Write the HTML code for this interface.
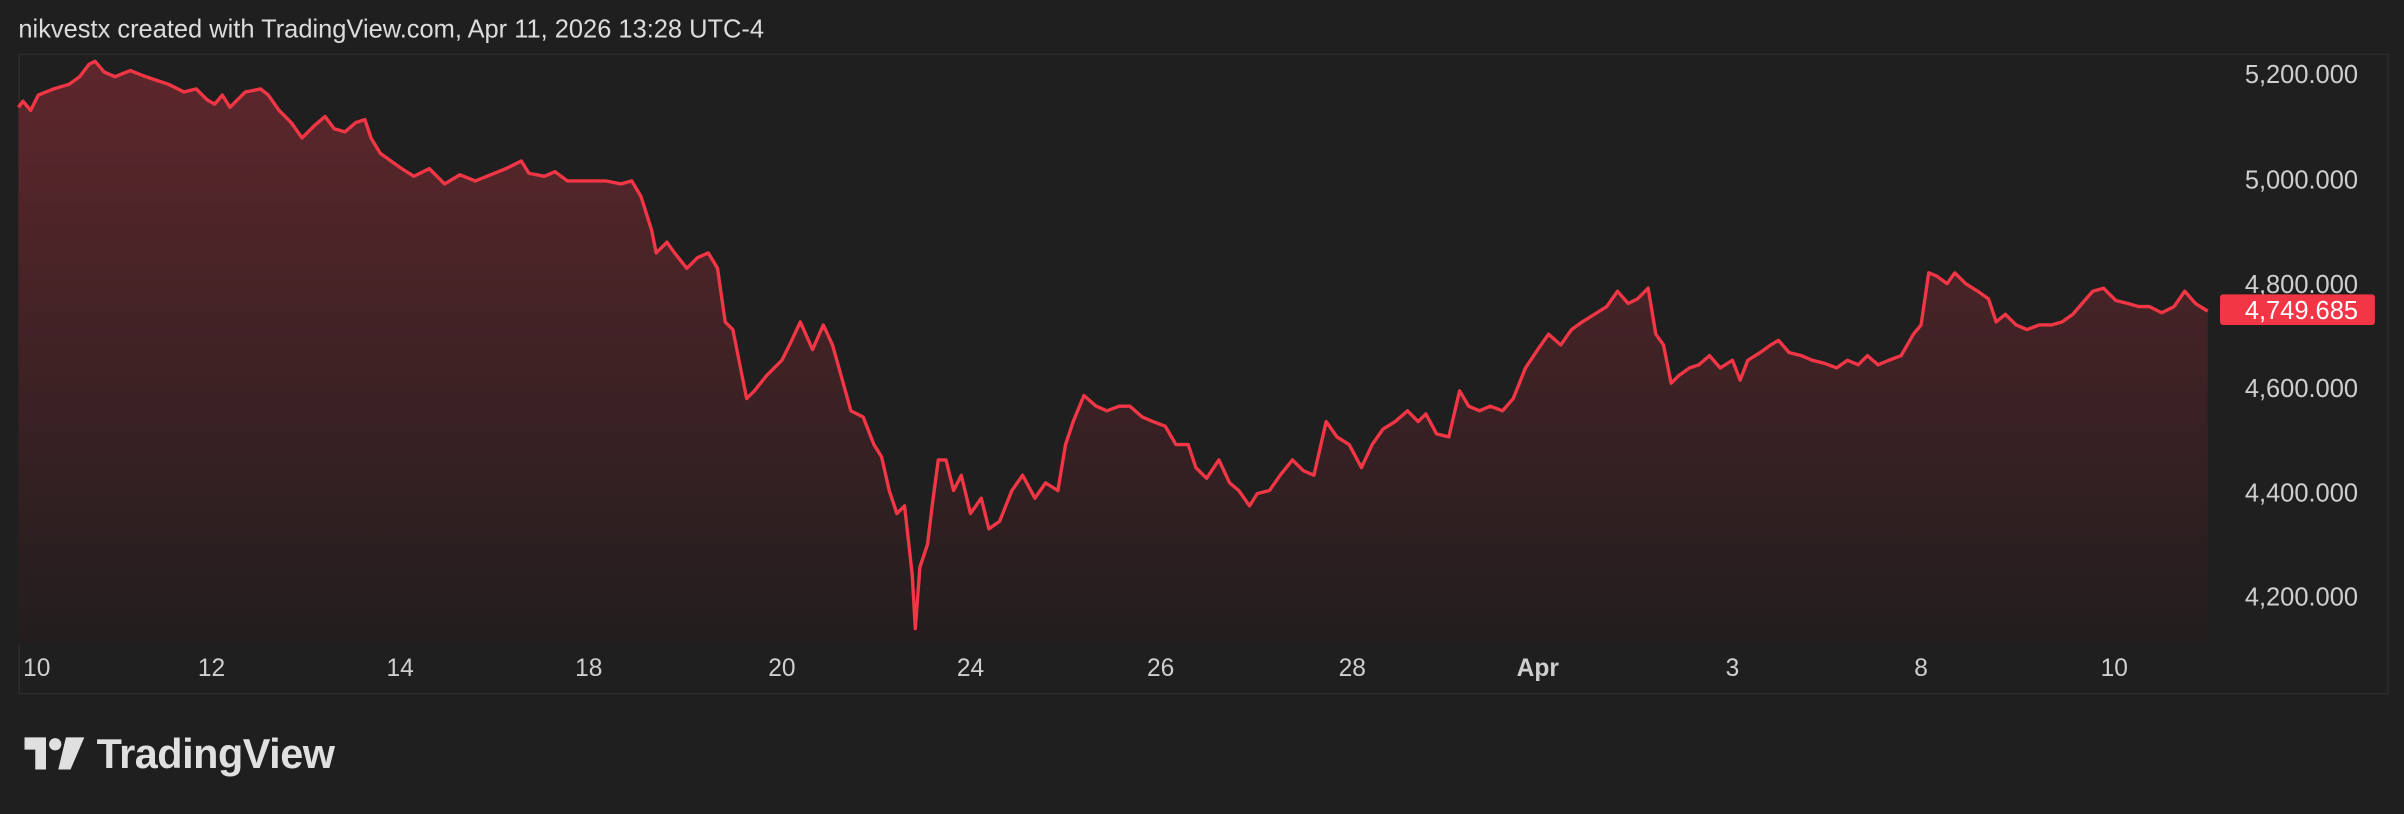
<!DOCTYPE html>
<html><head><meta charset="utf-8"><style>
html,body{margin:0;padding:0;background:#1f1f1f;}
svg{display:block;}
text{font-family:"Liberation Sans",sans-serif;}
</style></head><body>
<svg width="2404" height="814" viewBox="0 0 1568 531" preserveAspectRatio="none" xmlns="http://www.w3.org/2000/svg">
<defs>
<linearGradient id="g" gradientUnits="userSpaceOnUse" x1="0" y1="40" x2="0" y2="420">
<stop offset="0" stop-color="#5e272c"/>
<stop offset="1" stop-color="#221d1e"/>
</linearGradient>
</defs>
<rect width="1568" height="531" fill="#1f1f1f"/>
<text x="12" y="24.5" font-size="16.6" fill="#dcdcdc">nikvestx created with TradingView.com, Apr 11, 2026 13:28 UTC-4</text>
<rect x="12.5" y="35.5" width="1545" height="417" fill="none" stroke="#2d2d2d" stroke-width="1"/>
<g id="chart">
<path fill="url(#g)" d="M12,70 L15,66 L20,72 L25,62 L35,58 L45,55 L52,50 L58,42 L62,40 L68,47 L75,50 L85,46 L95,50 L110,55 L120,60 L128,58 L135,65 L140,68 L145,62 L150,70 L160,60 L170,58 L175,62 L182,72 L190,80 L197,90 L205,82 L212,76 L218,84 L225,86 L232,80 L238,78 L242,90 L248,100 L255,105 L262,110 L270,115 L280,110 L290,120 L300,114 L310,118 L320,114 L330,110 L340,105 L345,113 L355,115 L362,112 L370,118 L380,118 L395,118 L405,120 L412,118 L418,128 L425,150 L428,165 L435,158 L440,165 L448,175 L455,168 L462,165 L468,175 L473,210 L478,215 L483,240 L487,260 L492,255 L500,245 L510,235 L515,225 L522,210 L530,228 L537,212 L543,225 L550,250 L555,268 L563,272 L570,290 L575,298 L580,320 L585,335 L590,330 L595,375 L597,410 L600,370 L605,355 L608,330 L612,300 L617,300 L622,320 L627,310 L633,335 L640,325 L645,345 L652,340 L660,320 L667,310 L675,325 L682,315 L690,320 L695,290 L700,275 L707,258 L715,265 L722,268 L730,265 L737,265 L745,272 L752,275 L760,278 L767,290 L775,290 L780,305 L787,312 L795,300 L802,315 L808,320 L815,330 L820,322 L828,320 L835,310 L843,300 L850,307 L857,310 L865,275 L872,285 L880,290 L888,305 L895,290 L902,280 L910,275 L918,268 L925,275 L930,270 L937,283 L945,285 L952,255 L958,265 L965,268 L972,265 L980,268 L987,260 L995,240 L1003,228 L1010,218 L1018,225 L1025,215 L1032,210 L1040,205 L1048,200 L1055,190 L1062,198 L1068,195 L1075,188 L1080,218 L1085,225 L1090,250 L1095,245 L1102,240 L1108,238 L1115,232 L1122,240 L1130,235 L1135,248 L1140,235 L1148,230 L1155,225 L1160,222 L1167,230 L1175,232 L1182,235 L1190,237 L1198,240 L1205,235 L1212,238 L1218,232 L1225,238 L1232,235 L1240,232 L1248,218 L1253,212 L1258,178 L1263,180 L1270,185 L1275,178 L1282,185 L1290,190 L1297,195 L1302,210 L1308,205 L1315,212 L1322,215 L1330,212 L1338,212 L1345,210 L1352,205 L1358,198 L1365,190 L1372,188 L1380,196 L1388,198 L1395,200 L1402,200 L1410,204 L1418,200 L1425,190 L1432,198 L1440,203 L1440,420 L12,420 Z"/>
<path fill="none" stroke="#f23645" stroke-width="2.2" stroke-linejoin="round" d="M12,70 L15,66 L20,72 L25,62 L35,58 L45,55 L52,50 L58,42 L62,40 L68,47 L75,50 L85,46 L95,50 L110,55 L120,60 L128,58 L135,65 L140,68 L145,62 L150,70 L160,60 L170,58 L175,62 L182,72 L190,80 L197,90 L205,82 L212,76 L218,84 L225,86 L232,80 L238,78 L242,90 L248,100 L255,105 L262,110 L270,115 L280,110 L290,120 L300,114 L310,118 L320,114 L330,110 L340,105 L345,113 L355,115 L362,112 L370,118 L380,118 L395,118 L405,120 L412,118 L418,128 L425,150 L428,165 L435,158 L440,165 L448,175 L455,168 L462,165 L468,175 L473,210 L478,215 L483,240 L487,260 L492,255 L500,245 L510,235 L515,225 L522,210 L530,228 L537,212 L543,225 L550,250 L555,268 L563,272 L570,290 L575,298 L580,320 L585,335 L590,330 L595,375 L597,410 L600,370 L605,355 L608,330 L612,300 L617,300 L622,320 L627,310 L633,335 L640,325 L645,345 L652,340 L660,320 L667,310 L675,325 L682,315 L690,320 L695,290 L700,275 L707,258 L715,265 L722,268 L730,265 L737,265 L745,272 L752,275 L760,278 L767,290 L775,290 L780,305 L787,312 L795,300 L802,315 L808,320 L815,330 L820,322 L828,320 L835,310 L843,300 L850,307 L857,310 L865,275 L872,285 L880,290 L888,305 L895,290 L902,280 L910,275 L918,268 L925,275 L930,270 L937,283 L945,285 L952,255 L958,265 L965,268 L972,265 L980,268 L987,260 L995,240 L1003,228 L1010,218 L1018,225 L1025,215 L1032,210 L1040,205 L1048,200 L1055,190 L1062,198 L1068,195 L1075,188 L1080,218 L1085,225 L1090,250 L1095,245 L1102,240 L1108,238 L1115,232 L1122,240 L1130,235 L1135,248 L1140,235 L1148,230 L1155,225 L1160,222 L1167,230 L1175,232 L1182,235 L1190,237 L1198,240 L1205,235 L1212,238 L1218,232 L1225,238 L1232,235 L1240,232 L1248,218 L1253,212 L1258,178 L1263,180 L1270,185 L1275,178 L1282,185 L1290,190 L1297,195 L1302,210 L1308,205 L1315,212 L1322,215 L1330,212 L1338,212 L1345,210 L1352,205 L1358,198 L1365,190 L1372,188 L1380,196 L1388,198 L1395,200 L1402,200 L1410,204 L1418,200 L1425,190 L1432,198 L1440,203"/>
</g>
<g font-size="16.6" fill="#cfcfcf" text-anchor="end">
<text x="1538" y="54">5,200.000</text>
<text x="1538" y="123">5,000.000</text>
<text x="1538" y="191">4,800.000</text>
<text x="1538" y="259">4,600.000</text>
<text x="1538" y="327">4,400.000</text>
<text x="1538" y="395">4,200.000</text>
</g>
<rect x="1448" y="192" width="101" height="20" rx="2" fill="#f23645"/>
<text x="1538" y="208" font-size="16.6" fill="#ffffff" text-anchor="end">4,749.685</text>
<g font-size="16" fill="#cfcfcf" text-anchor="middle">
<text x="24" y="441">10</text>
<text x="138" y="441">12</text>
<text x="261" y="441">14</text>
<text x="384" y="441">18</text>
<text x="510" y="441">20</text>
<text x="633" y="441">24</text>
<text x="757" y="441">26</text>
<text x="882" y="441">28</text>
<text x="1003" y="441" font-weight="bold">Apr</text>
<text x="1130" y="441">3</text>
<text x="1253" y="441">8</text>
<text x="1379" y="441">10</text>
</g>
<g fill="#e0e0e0">
<path d="M16,481 H30 V502 H23 V489 H16 Z"/>
<circle cx="36" cy="485.5" r="4"/>
<path d="M43,481 H55 L46,502 H38 Z"/>
<text x="63" y="501" font-size="27" font-weight="bold" letter-spacing="-0.3">TradingView</text>
</g>
</svg>
</body></html>
